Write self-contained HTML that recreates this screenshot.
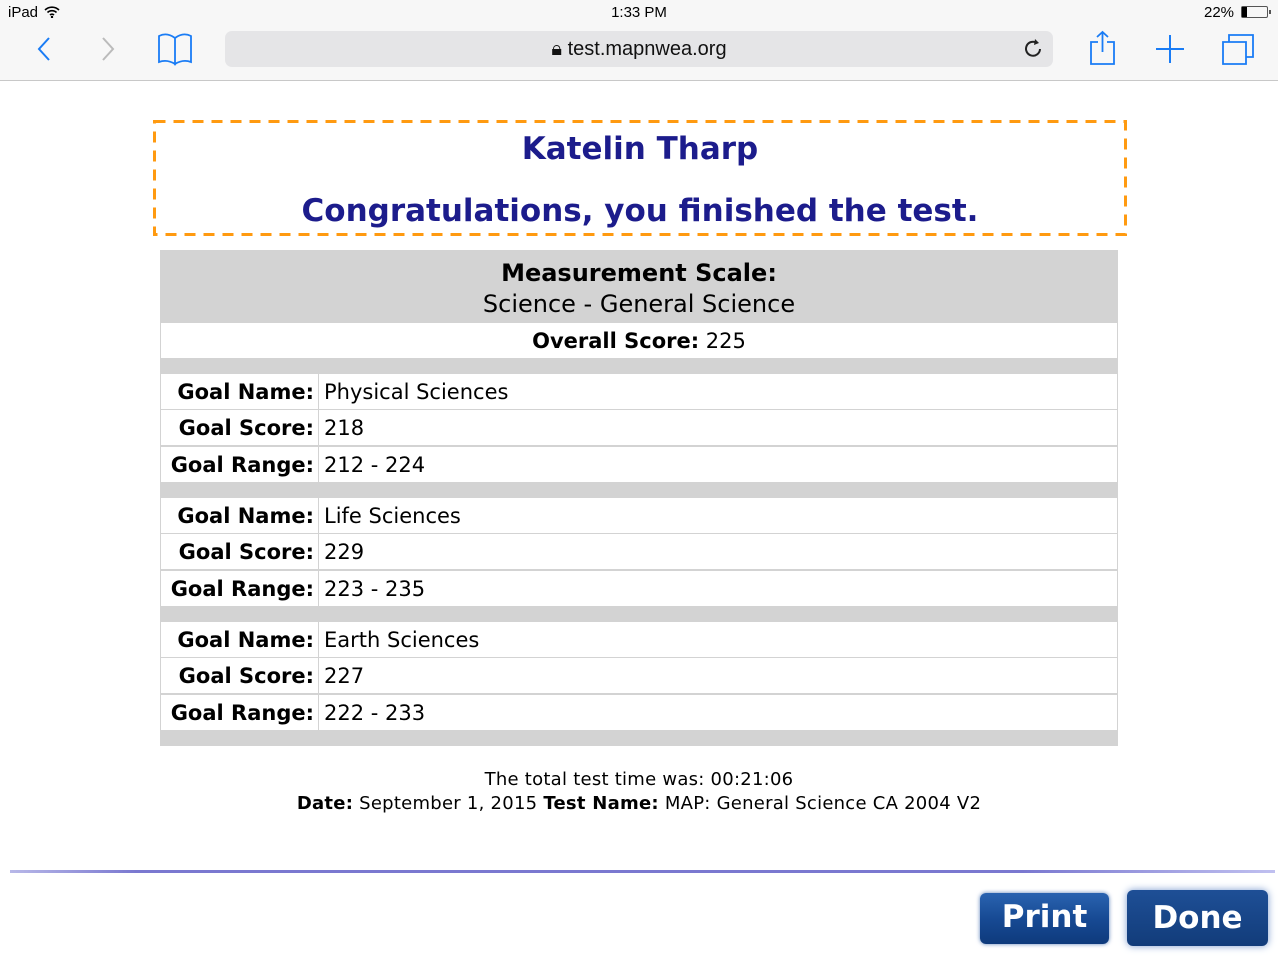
<!DOCTYPE html>
<html><head><meta charset="utf-8"><style>
*{margin:0;padding:0;box-sizing:border-box}
body{width:1278px;height:959px;background:#fff;position:relative;overflow:hidden;font-family:"DejaVu Sans","Liberation Sans",sans-serif}
.bar{position:absolute;left:0;top:0;width:1278px;height:81px;background:#f7f7f7;border-bottom:1px solid #c8c8c8}
.ab{position:absolute}
.url{position:absolute;left:225px;top:31px;width:828px;height:36px;background:#e5e5e7;border-radius:7px;font-family:"Liberation Sans",sans-serif;font-size:20px;text-align:center;line-height:36px;color:#111}
.box{position:absolute;left:153px;top:120px;width:974px;height:116px}
.h{position:absolute;left:0;width:100%;text-align:center;color:#1c1c8c;font-weight:bold;font-size:31px}
.tbl{position:absolute;left:160px;top:250px;width:958px;background:#d3d3d3}
.row{position:absolute;left:161px;width:956px;height:35px;background:#fff;font-size:21px;line-height:37px}
.lab{position:absolute;left:0;width:158px;text-align:right;font-weight:bold;padding-right:4px;border-right:1px solid #d3d3d3;height:35px}
.val{position:absolute;left:163px}
.btn{position:absolute;border-radius:6px;color:#fff;font-weight:bold;font-size:31px;text-align:center;background:linear-gradient(#2a63b0,#174a94 50%,#0e3a7c);box-shadow:0 0 4px #5a7fb8}
</style></head><body>
<div class="bar"></div>
<div class="ab" style="left:8px;top:4px;font-family:'Liberation Sans';font-size:15px">iPad</div>
<svg class="ab" style="left:44px;top:6px" width="16" height="12" viewBox="0 0 16 12"><path d="M1 4a10 10 0 0 1 14 0M3.5 6.5a6.5 6.5 0 0 1 9 0M6 9a3 3 0 0 1 4 0" stroke="#000" stroke-width="1.6" fill="none"/><circle cx="8" cy="11" r="1.2"/></svg>
<div class="ab" style="left:0;width:1278px;text-align:center;top:4px;font-family:'Liberation Sans';font-size:15px">1:33 PM</div>
<div class="ab" style="left:1204px;top:4px;font-family:'Liberation Sans';font-size:15px">22%</div>
<div class="ab" style="left:1241px;top:6px;width:27px;height:12px;border:1px solid #555;border-radius:2px"><div style="width:5px;height:10px;background:#000"></div></div>
<div class="ab" style="left:1269px;top:10px;width:2px;height:4px;background:#555"></div>
<svg class="ab" style="left:36px;top:36px" width="16" height="26"><path d="M13 2L3 13l10 11" stroke="#1a7cf5" stroke-width="2" fill="none"/></svg>
<svg class="ab" style="left:100px;top:36px" width="16" height="26"><path d="M3 2l10 11L3 24" stroke="#bbb" stroke-width="2" fill="none"/></svg>
<svg class="ab" style="left:157px;top:32px" width="36" height="34"><path d="M2 4q8-4 16 2v26q-8-5-16-2zM34 4q-8-4-16 2v26q8-5 16-2z" stroke="#1a7cf5" stroke-width="1.8" fill="none"/></svg>
<div class="url">🔒︎ test.mapnwea.org</div>
<svg class="ab" style="left:1022px;top:37px" width="24" height="24"><path d="M18 12a7 7 0 1 1-3-6" stroke="#222" stroke-width="2" fill="none"/><path d="M13 2l4 4-5 2z" fill="#222"/></svg>
<svg class="ab" style="left:1088px;top:30px" width="30" height="36"><path d="M10 12H3v22h23V12h-7M14.5 22V2M9 7l5.5-5 5.5 5" stroke="#1a7cf5" stroke-width="1.8" fill="none"/></svg>
<svg class="ab" style="left:1155px;top:34px" width="30" height="30"><path d="M15 1v28M1 15h28" stroke="#1a7cf5" stroke-width="2"/></svg>
<svg class="ab" style="left:1221px;top:32px" width="34" height="34"><path d="M2 10h23v22H2zM8 10V3h24v22h-7" stroke="#1a7cf5" stroke-width="1.8" fill="none"/></svg>

<div class="box">
<svg class="ab" style="left:0;top:0" width="974" height="116"><rect x="1.5" y="1.5" width="971" height="113" fill="none" stroke="#ff9a10" stroke-width="3" stroke-dasharray="11 8"/></svg>
<div class="h" style="top:11px">Katelin Tharp</div><div class="h" style="top:73px">Congratulations, you finished the test.</div></div>

<div class="tbl" style="height:496px"></div>
<div class="ab" style="left:160px;top:258px;width:958px;text-align:center;font-size:24px;line-height:31px"><b>Measurement Scale:</b><br>Science - General Science</div>
<div class="row" style="top:323px;text-align:center"><b>Overall Score:</b> 225</div>

<div class="row" style="top:374px"><div class="lab">Goal Name:</div><div class="val">Physical Sciences</div></div>
<div class="row" style="top:410px"><div class="lab">Goal Score:</div><div class="val">218</div></div>
<div class="row" style="top:447px"><div class="lab">Goal Range:</div><div class="val">212 - 224</div></div>
<div class="row" style="top:498px"><div class="lab">Goal Name:</div><div class="val">Life Sciences</div></div>
<div class="row" style="top:534px"><div class="lab">Goal Score:</div><div class="val">229</div></div>
<div class="row" style="top:571px"><div class="lab">Goal Range:</div><div class="val">223 - 235</div></div>
<div class="row" style="top:622px"><div class="lab">Goal Name:</div><div class="val">Earth Sciences</div></div>
<div class="row" style="top:658px"><div class="lab">Goal Score:</div><div class="val">227</div></div>
<div class="row" style="top:695px"><div class="lab">Goal Range:</div><div class="val">222 - 233</div></div>

<div class="ab" style="left:0;width:1278px;top:768px;text-align:center;font-size:18px;line-height:24px;letter-spacing:0.25px">The total test time was: 00:21:06<br><b>Date:</b> September 1, 2015 <b>Test Name:</b> MAP: General Science CA 2004 V2</div>

<div class="ab" style="left:10px;top:870px;width:1265px;height:3px;background:linear-gradient(90deg,#b8b8e8,#7a78d0 10%,#7a78d0 80%,#c0c0f0)"></div>
<div class="btn" style="left:980px;top:893px;width:129px;height:51px;line-height:49px">Print</div>
<div class="btn" style="left:1127px;top:890px;width:141px;height:56px;line-height:56px;background:linear-gradient(#1e4f96,#123c7a);box-shadow:0 0 8px #7d9cd0">Done</div>
</body></html>
